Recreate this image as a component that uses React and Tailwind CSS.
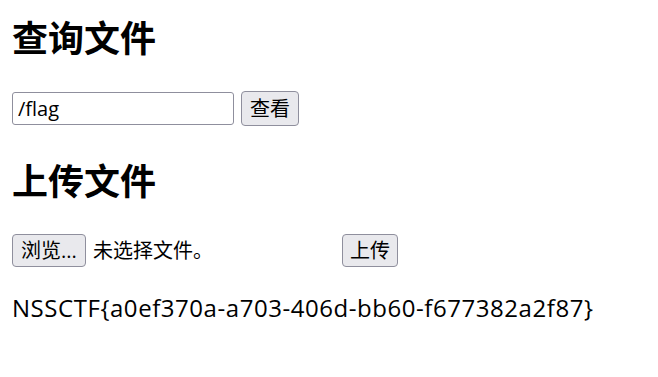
import React from 'react'

const FONT = "font-['Open_Sans','Noto_Sans_CJK_SC',sans-serif]"

// Firefox-like form button
const FormButton = ({ children, className = '' }) => (
  <button
    type="button"
    className={`flex items-center justify-center rounded-[4px] border border-[#8f8f9d] bg-[#e9e9ed] text-[20px] leading-none text-black ${className}`}
  >
    {children}
  </button>
)

const App = () => {
  return (
    <div className={`min-h-[377px] w-[658px] bg-white px-3 text-black ${FONT}`}>
      {/* 查询文件 */}
      <section className="flex flex-col">
        <h1 className="mt-[15px] text-[36px] font-bold leading-[48px]">查询文件</h1>
        <div className="mt-[28px] flex items-center gap-[7px]">
          <input
            type="text"
            defaultValue="/flag"
            className="h-[33px] w-[222px] rounded-[3px] border border-[#8f8f9d] px-[5px] text-[20px] leading-none text-black outline-none"
          />
          <FormButton className="h-[35px] w-[58px]">查看</FormButton>
        </div>
      </section>

      {/* 上传文件 */}
      <section className="flex flex-col">
        <h1 className="mt-[32px] text-[36px] font-bold leading-[48px]">上传文件</h1>
        <div className="mt-[28px] flex items-center">
          <div className="flex w-[330px] items-center gap-[7px]">
            <FormButton className="h-[33px] w-[74px]">浏览...</FormButton>
            <span className="text-[20px] leading-none">未选择文件。</span>
          </div>
          <FormButton className="h-[33px] w-[56px]">上传</FormButton>
        </div>
      </section>

      <p className="mt-[25px] text-[24px] leading-[32px] tracking-[0.55px]">
        NSSCTF{'{'}a0ef370a-a703-406d-bb60-f677382a2f87{'}'}
      </p>
    </div>
  )
}

export default App
